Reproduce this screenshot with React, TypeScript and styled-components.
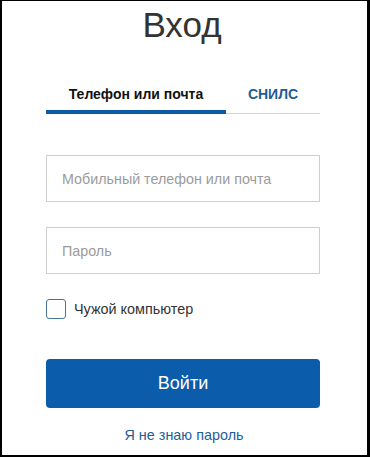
import React, { useState } from "react";
import styled, { createGlobalStyle } from "styled-components";

const Global = createGlobalStyle`
  html, body { margin: 0; padding: 0; background: #fff; }
  body { font-family: "Liberation Sans", Arial, sans-serif; }
  * { box-sizing: border-box; }
`;

const Frame = styled.div`
  width: 370px;
  height: 457px;
  border-style: solid;
  border-color: #000;
  border-width: 1px 3px 2px 2px;
  background: #fff;
  padding: 6px 47px 0 44px;
  display: flex;
  flex-direction: column;
`;

const Title = styled.h1`
  margin: 0;
  font-weight: 400;
  font-size: 35px;
  line-height: 36px;
  color: #333;
  text-align: center;
  padding-right: 2px;
`;

const TabList = styled.div`
  margin-top: 41px;
  display: flex;
  box-shadow: inset 0 -1px 0 #d3d3d3;
`;

const Tab = styled.button<{ $active?: boolean; $w: number }>`
  width: ${(p) => p.$w}px;
  flex: none;
  border: none;
  background: transparent;
  padding: 0 0 6px;
  font-family: inherit;
  font-weight: 700;
  font-size: 14px;
  line-height: 20px;
  color: ${(p) => (p.$active ? "#111" : "#1f5c92")};
  border-bottom: 4px solid ${(p) => (p.$active ? "#0d5aa7" : "transparent")};
  cursor: pointer;
`;

const Form = styled.div`
  margin-top: 41px;
  display: flex;
  flex-direction: column;
`;

const Input = styled.input<{ $gap?: number }>`
  width: 274px;
  height: 47px;
  margin-top: ${(p) => p.$gap ?? 0}px;
  border: 1px solid #cfcfcf;
  padding: 0 15px;
  font-family: inherit;
  font-size: 14.3px;
  color: #333;
  outline: none;
  &::placeholder { color: #9b9b9b; }
`;

const CheckRow = styled.label`
  margin-top: 25px;
  display: flex;
  align-items: center;
  gap: 8px;
  font-size: 14.4px;
  color: #333;
  cursor: pointer;
`;

const Box = styled.span`
  width: 20px;
  height: 20px;
  border: 1.5px solid #4a7496;
  border-radius: 3px;
  flex: none;
`;

const Submit = styled.button`
  margin-top: 40px;
  width: 274px;
  height: 49px;
  border: none;
  border-radius: 4px;
  background: #0b5cab;
  color: #fff;
  font-family: inherit;
  font-size: 18px;
  cursor: pointer;
`;

const Forgot = styled.a`
  margin-top: 19px;
  align-self: center;
  font-size: 14.4px;
  color: #245e98;
  text-decoration: none;
  margin-left: 2px;
`;

export default function App() {
  const [tab, setTab] = useState(0);
  return (
    <>
      <Global />
      <Frame>
        <Title>Вход</Title>
        <TabList>
          <Tab $w={180} $active={tab === 0} onClick={() => setTab(0)}>
            Телефон или почта
          </Tab>
          <Tab $w={94} $active={tab === 1} onClick={() => setTab(1)}>
            СНИЛС
          </Tab>
        </TabList>
        <Form>
          <Input placeholder="Мобильный телефон или почта" />
          <Input $gap={25} type="password" placeholder="Пароль" />
          <CheckRow>
            <Box />
            Чужой компьютер
          </CheckRow>
          <Submit>Войти</Submit>
          <Forgot href="#">Я не знаю пароль</Forgot>
        </Form>
      </Frame>
    </>
  );
}
